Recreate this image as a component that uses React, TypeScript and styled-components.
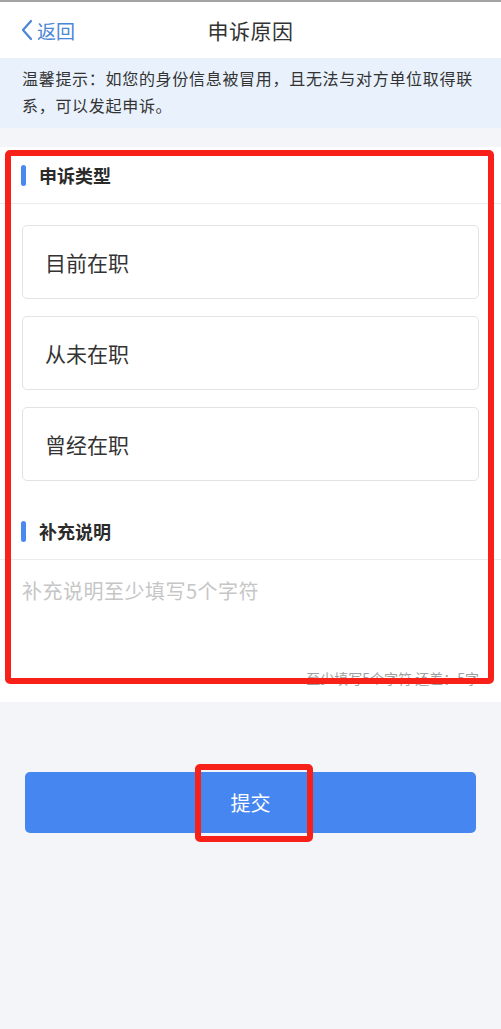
import styled, { createGlobalStyle } from 'styled-components';

const GlobalStyle = createGlobalStyle`
  html, body {
    margin: 0;
    padding: 0;
    background: #f4f5f9;
    font-family: 'Noto Sans CJK SC', 'Noto Sans', sans-serif;
  }
  * { box-sizing: border-box; }
`;

const Page = styled.div`
  min-height: 1029px;
  background: #f4f5f9;
  display: flex;
  flex-direction: column;
`;

const TopBar = styled.div`
  height: 58px;
  background: #fff;
  border-top: 2px solid #a3a3a3;
  display: grid;
  grid-template-columns: 1fr auto 1fr;
  align-items: center;
  padding: 0 20px;
`;

const Back = styled.div`
  display: flex;
  align-items: center;
  gap: 3px;
  color: #4a86d8;
  font-size: 19px;
`;

const Title = styled.div`
  font-size: 21px;
  color: #333;
  letter-spacing: 0.5px;
`;

const Notice = styled.div`
  background: #e8f1fc;
  padding: 7px 22px 9px;
  font-size: 16px;
  letter-spacing: 0.7px;
  line-height: 27px;
  color: #333;
  margin-bottom: 19px;
`;

const Card = styled.div`
  position: relative;
  background: #fff;
`;

const SectionHead = styled.div`
  height: 57px;
  display: flex;
  align-items: center;
  gap: 13px;
  padding-left: 21px;
  border-bottom: 1px solid #ececec;
  font-size: 18px;
  font-weight: 700;
  color: #2b2b2b;
  &::before {
    content: '';
    width: 5px;
    height: 21px;
    border-radius: 3px;
    background: #4a89f0;
  }
`;

const Options = styled.div`
  display: flex;
  flex-direction: column;
  gap: 17px;
  padding: 21px 22px 22px;
`;

const Option = styled.div`
  height: 74px;
  border: 1px solid #e3e3e3;
  border-radius: 5px;
  display: flex;
  align-items: center;
  padding-left: 22px;
  font-size: 21px;
  color: #333;
`;

const TextArea = styled.div`
  height: 142px;
  display: flex;
  flex-direction: column;
  justify-content: space-between;
  padding: 16px 22px 14px;
`;

const Placeholder = styled.div`
  font-size: 20px;
  letter-spacing: 0.5px;
  color: #c6c6c6;
`;

const Counter = styled.div`
  align-self: flex-end;
  font-size: 14px;
  color: #a0a0a0;
`;

const Mark = styled.div<{ $top: number; $left: number; $w: number; $h: number }>`
  position: absolute;
  top: ${p => p.$top}px;
  left: ${p => p.$left}px;
  width: ${p => p.$w}px;
  height: ${p => p.$h}px;
  border: 6px solid #f8211a;
  border-radius: 5px;
  pointer-events: none;
`;

const Footer = styled.div`
  position: relative;
  padding: 70px 25px 0;
`;

const Submit = styled.button`
  width: 100%;
  height: 61px;
  border: none;
  border-radius: 5px;
  background: #4586f0;
  color: #fff;
  font-family: inherit;
  font-size: 20px;
`;

export default function App() {
  return (
    <>
      <GlobalStyle />
      <Page>
        <TopBar>
          <Back>
            <svg width="14" height="22" viewBox="0 0 14 22">
              <path d="M11 2 L3 11 L11 20" fill="none" stroke="#4a86d8" strokeWidth="2.2" strokeLinecap="round" strokeLinejoin="round" />
            </svg>
            返回
          </Back>
          <Title>申诉原因</Title>
          <div />
        </TopBar>
        <Notice>温馨提示：如您的身份信息被冒用，且无法与对方单位取得联系，可以发起申诉。</Notice>
        <Card>
          <SectionHead>申诉类型</SectionHead>
          <Options>
            <Option>目前在职</Option>
            <Option>从未在职</Option>
            <Option>曾经在职</Option>
          </Options>
          <SectionHead>补充说明</SectionHead>
          <TextArea>
            <Placeholder>补充说明至少填写5个字符</Placeholder>
            <Counter>至少填写5个字符 还差：5字</Counter>
          </TextArea>
          <Mark $top={3} $left={5} $w={489} $h={534} />
        </Card>
        <Footer>
          <Submit>提交</Submit>
          <Mark $top={62} $left={195} $w={118} $h={78} />
        </Footer>
      </Page>
    </>
  );
}
